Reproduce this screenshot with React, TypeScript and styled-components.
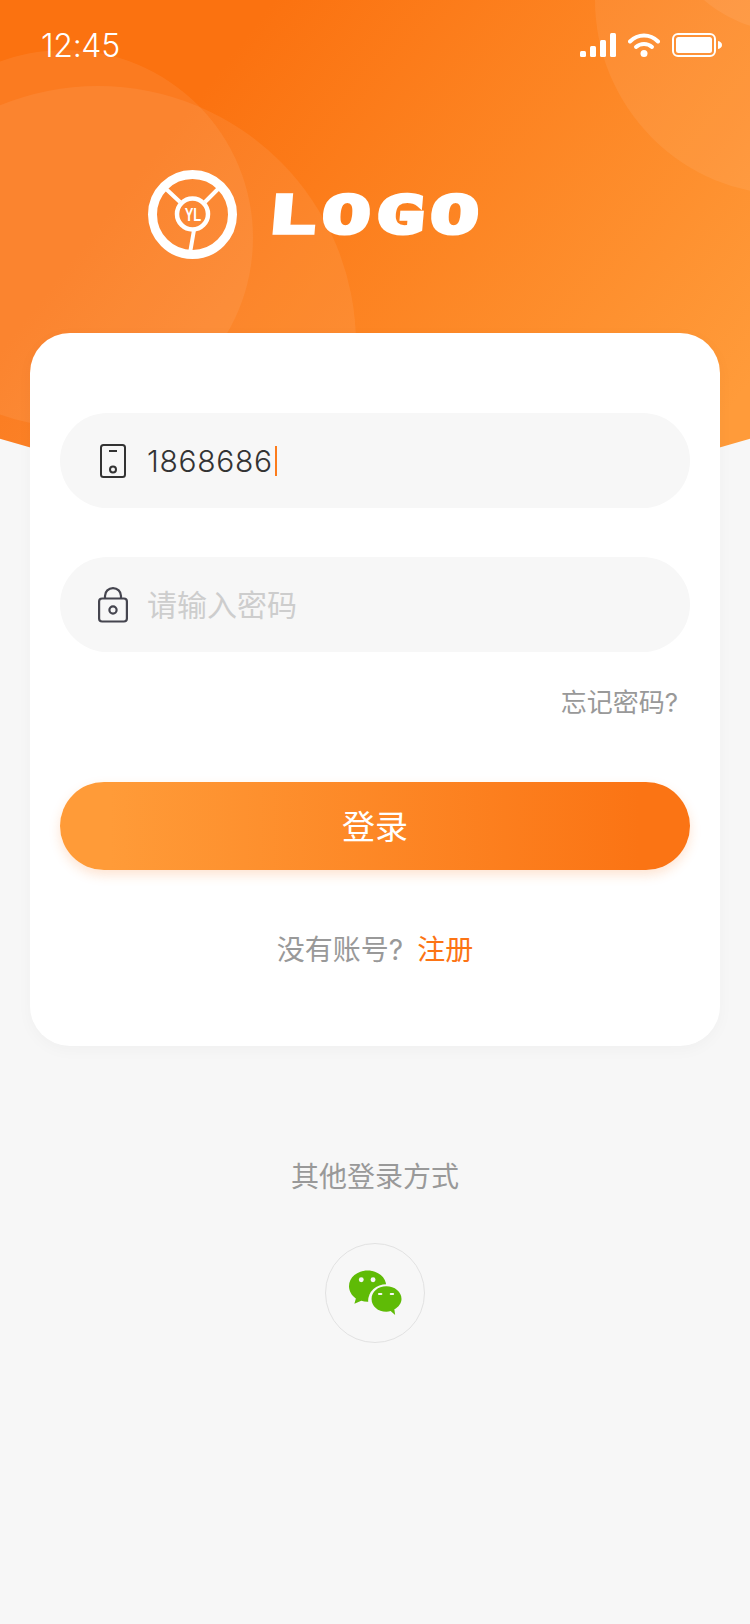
import React from "react";
import styled, { createGlobalStyle } from "styled-components";

const Global = createGlobalStyle`
  html, body { margin: 0; padding: 0; background: #f7f7f7; }
  * { box-sizing: border-box; }
`;

const fontStack = `Inter, "Noto Sans CJK SC", sans-serif`;

const Page = styled.div`
  position: relative;
  width: 750px;
  height: 1624px;
  overflow: hidden;
  background: #f7f7f7;
  font-family: ${fontStack};
`;

const Header = styled.header`
  position: relative;
  height: 500px;
  overflow: hidden;
  background: linear-gradient(128deg, #fb7210 24%, #ff9b3a 92%);
  clip-path: circle(1300px at 375px -806px);
`;

const Bubble = styled.div<{ $x: number; $y: number; $r: number; $a: number }>`
  position: absolute;
  left: ${(p) => p.$x - p.$r}px;
  top: ${(p) => p.$y - p.$r}px;
  width: ${(p) => p.$r * 2}px;
  height: ${(p) => p.$r * 2}px;
  border-radius: 50%;
  background: rgba(255, 255, 255, ${(p) => p.$a});
`;

const StatusBar = styled.div`
  position: relative;
  display: flex;
  align-items: center;
  justify-content: space-between;
  height: 24px;
  margin-top: 33px;
  padding: 0 28px 0 41px;
  color: #fff;
`;

const Time = styled.span`
  position: relative;
  top: 1px;
  font-size: 32px;
  font-weight: 300;
  line-height: 24px;
  letter-spacing: -0.3px;
`;

const StatusIcons = styled.div`
  display: flex;
  align-items: center;
  gap: 12px;
`;

const Brand = styled.div`
  position: relative;
  display: flex;
  align-items: center;
  margin-top: 113px;
  padding-left: 148px;
`;

const Emblem = styled.div`
  position: relative;
  width: 89px;
  height: 89px;
`;

const EmblemText = styled.span`
  position: absolute;
  top: 50%;
  left: 50%;
  transform: translate(-50%, -50%) scaleX(0.72);
  color: #fff;
  font-family: "Liberation Sans", sans-serif;
  font-size: 18px;
  font-weight: 700;
  line-height: 1;
`;

const Wordmark = styled.span`
  display: inline-block;
  margin-left: 31px;
  color: #fff;
  font-family: "DejaVu Sans Mono", monospace;
  font-size: 52px;
  font-weight: 700;
  line-height: 44px;
  letter-spacing: 3.6px;
  -webkit-text-stroke: 3.5px #fff;
  transform: skewX(-5deg) scaleX(1.55);
  transform-origin: left center;
`;

const Card = styled.main`
  position: relative;
  display: flex;
  flex-direction: column;
  width: 690px;
  height: 713px;
  margin: -167px 0 0 30px;
  padding: 80px 30px 0;
  border-radius: 40px;
  background: #fff;
  box-shadow: 0 4px 16px rgba(0, 0, 0, 0.03);
`;

const Field = styled.div`
  display: flex;
  align-items: center;
  height: 95px;
  padding-left: 38px;
  border-radius: 48px;
  background: #f7f7f7;
  & + & { margin-top: 49px; }
`;

const FieldIcon = styled.span`
  display: flex;
  justify-content: center;
  width: 30px;
  margin-right: 19px;
`;

const FieldValue = styled.span`
  display: flex;
  align-items: center;
  color: #333;
  font-size: 30px;
  font-weight: 300;
  letter-spacing: 0.7px;
`;

const Caret = styled.i`
  display: block;
  width: 2px;
  height: 30px;
  margin-left: 2px;
  background: #fc7c1c;
`;

const Placeholder = styled.span`
  padding: 0 0 4px 0;
  color: #cdcdcd;
  font-size: 30px;
`;

const Forgot = styled.div`
  height: 130px;
  padding: 32px 12px 0 0;
  color: #999;
  font-size: 26px;
  line-height: 38px;
  text-align: right;
`;

const LoginButton = styled.button`
  display: block;
  width: 630px;
  height: 88px;
  padding: 0 0 3px;
  border: 0;
  border-radius: 44px;
  color: #fff;
  font-family: ${fontStack};
  font-size: 33px;
  background: linear-gradient(90deg, #ff9b38 8%, #fb7414 92%);
  box-shadow: 0 5px 12px rgba(252, 120, 30, 0.2);
`;

const SignUp = styled.p`
  margin: 60px 0 0;
  color: #999;
  font-size: 28px;
  line-height: 40px;
  text-align: center;
`;

const SignUpLink = styled.a`
  margin-left: 14px;
  color: #fc7414;
`;

const Others = styled.section`
  display: flex;
  flex-direction: column;
  align-items: center;
  padding-top: 111px;
`;

const OthersLabel = styled.div`
  color: #999;
  font-size: 28px;
  line-height: 40px;
`;

const WeChatButton = styled.button`
  display: flex;
  align-items: center;
  justify-content: center;
  width: 100px;
  height: 100px;
  margin-top: 46px;
  padding: 0 0 0 1px;
  border: 1px solid #e2e2e2;
  border-radius: 50%;
  background: transparent;
`;

const Signal = () => (
  <svg width="36" height="24" viewBox="0 0 36 24" fill="#fff">
    <rect x="0" y="18" width="6" height="6" rx="1.5" />
    <rect x="10" y="13" width="6" height="11" rx="1.5" />
    <rect x="20" y="7" width="6" height="17" rx="1.5" />
    <rect x="30" y="0" width="6" height="24" rx="1.5" />
  </svg>
);

const Wifi = () => (
  <svg width="32" height="24" viewBox="0 0 32 24" fill="none" stroke="#fff" strokeWidth="4" strokeLinecap="round">
    <path d="M2 8.5 C10 0.5 22 0.5 30 8.5" />
    <path d="M8 14 C12.5 10 19.5 10 24 14" />
    <circle cx="16" cy="20.5" r="3.5" fill="#fff" stroke="none" />
  </svg>
);

const Battery = () => (
  <svg width="50" height="24" viewBox="0 0 50 24" fill="none">
    <rect x="1" y="1" width="42" height="22" rx="5" stroke="#fff" strokeWidth="2" />
    <rect x="4" y="4" width="36" height="16" rx="2.5" fill="#fff" />
    <path d="M46 8 C48.5 8.5 50 10 50 12 C50 14 48.5 15.5 46 16 Z" fill="#fff" />
  </svg>
);

const LogoMark = () => (
  <svg width="89" height="89" viewBox="0 0 89 89" fill="none" stroke="#fff">
    <circle cx="44.5" cy="44.5" r="40" strokeWidth="9" />
    <circle cx="44.5" cy="44" r="15.5" strokeWidth="4.5" />
    <path d="M17 18 L32 32 M71 18 L57 32 M46 60 L42 83" strokeWidth="4" />
  </svg>
);

const PhoneIcon = () => (
  <svg width="26" height="34" viewBox="0 0 26 34" fill="none" stroke="#333" strokeWidth="2">
    <rect x="1" y="1" width="24" height="32" rx="2.5" />
    <path d="M9 7 H17" />
    <circle cx="13" cy="25.5" r="3" />
  </svg>
);

const LockIcon = () => (
  <svg width="30" height="36" viewBox="0 0 30 36" fill="none" stroke="#45454f" strokeWidth="2.2">
    <rect x="1.1" y="11.5" width="27.8" height="23" rx="3" />
    <path d="M7 11.5 V9 C7 4.5 10.5 1.2 15 1.2 C19.5 1.2 23 4.5 23 9 V11.5" />
    <circle cx="15" cy="23" r="3.6" />
  </svg>
);

const WeChatIcon = () => (
  <svg width="53" height="46" viewBox="0 0 54 46">
    <path d="M19 0 C8.5 0 0 7 0 16 C0 21 2.8 25.5 7 28.5 L5.5 34 L12.5 30.8 C14.5 31.4 16.7 31.8 19 31.8 C29.5 31.8 38 24.8 38 16 C38 7 29.5 0 19 0 Z" fill="#5fbb06" />
    <ellipse cx="38" cy="31" rx="18.5" ry="17" fill="#f7f7f7" />
    <path d="M38 16 C29.5 16 23 21.6 23 29 C23 36.4 29.5 42 38 42 C39.6 42 41 41.8 42.4 41.4 L47 45.5 L46.2 39.6 C50.6 37 53.5 33.4 53.5 29 C53.5 21.6 46.5 16 38 16 Z" fill="#5fbb06" />
    <circle cx="12.5" cy="9.5" r="2.5" fill="#f7f7f7" />
    <circle cx="24.5" cy="9.5" r="2.5" fill="#f7f7f7" />
    <rect x="29.5" y="23" width="4.5" height="2" rx="1" fill="#f7f7f7" />
    <rect x="41.5" y="23" width="4.5" height="2" rx="1" fill="#f7f7f7" />
  </svg>
);

export default function App() {
  return (
    <Page>
      <Global />
      <Header>
        <Bubble $x={65} $y={238} $r={188} $a={0.07} />
        <Bubble $x={98} $y={344} $r={258} $a={0.07} />
        <Bubble $x={790} $y={0} $r={195} $a={0.07} />
        <Bubble $x={790} $y={-100} $r={132} $a={0.07} />
        <StatusBar>
          <Time>12:45</Time>
          <StatusIcons>
            <Signal />
            <Wifi />
            <Battery />
          </StatusIcons>
        </StatusBar>
        <Brand>
          <Emblem>
            <LogoMark />
            <EmblemText>YL</EmblemText>
          </Emblem>
          <Wordmark>LOGO</Wordmark>
        </Brand>
      </Header>
      <Card>
        <Field>
          <FieldIcon><PhoneIcon /></FieldIcon>
          <FieldValue>1868686<Caret /></FieldValue>
        </Field>
        <Field>
          <FieldIcon><LockIcon /></FieldIcon>
          <Placeholder>请输入密码</Placeholder>
        </Field>
        <Forgot>忘记密码?</Forgot>
        <LoginButton>登录</LoginButton>
        <SignUp>没有账号?<SignUpLink>注册</SignUpLink></SignUp>
      </Card>
      <Others>
        <OthersLabel>其他登录方式</OthersLabel>
        <WeChatButton><WeChatIcon /></WeChatButton>
      </Others>
    </Page>
  );
}
